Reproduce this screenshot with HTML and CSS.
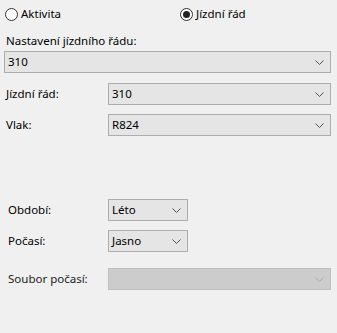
FILE: index.html
```html
<!DOCTYPE html>
<html lang="cs">
<head>
<meta charset="utf-8">
<link rel="stylesheet" href="styles.css">
</head>
<body>
<div class="panel">
  <div class="radios">
    <div class="radio r1"><span class="dot"></span><span>Aktivita</span></div>
    <div class="radio r2"><span class="dot on"></span><span>Jízdní řád</span></div>
  </div>
  <div class="caption">Nastavení jízdního řádu:</div>
  <div class="combo wide"><span class="val">310</span><svg class="chev" width="9" height="5" viewBox="0 0 9 5"><path d="M0.5 0.5 L4.5 4.5 L8.5 0.5" fill="none" stroke="#555" stroke-width="1"/></svg></div>

  <div class="row first">
    <div class="lbl">Jízdní řád:</div>
    <div class="combo fill"><span class="val">310</span><svg class="chev" width="9" height="5" viewBox="0 0 9 5"><path d="M0.5 0.5 L4.5 4.5 L8.5 0.5" fill="none" stroke="#555" stroke-width="1"/></svg></div>
  </div>
  <div class="row">
    <div class="lbl">Vlak:</div>
    <div class="combo fill"><span class="val">R824</span><svg class="chev" width="9" height="5" viewBox="0 0 9 5"><path d="M0.5 0.5 L4.5 4.5 L8.5 0.5" fill="none" stroke="#555" stroke-width="1"/></svg></div>
  </div>

  <div class="row season">
    <div class="lbl l2">Období:</div>
    <div class="combo small"><span class="val">Léto</span><svg class="chev" width="9" height="5" viewBox="0 0 9 5"><path d="M0.5 0.5 L4.5 4.5 L8.5 0.5" fill="none" stroke="#555" stroke-width="1"/></svg></div>
  </div>
  <div class="row">
    <div class="lbl l2">Počasí:</div>
    <div class="combo small"><span class="val">Jasno</span><svg class="chev" width="9" height="5" viewBox="0 0 9 5"><path d="M0.5 0.5 L4.5 4.5 L8.5 0.5" fill="none" stroke="#555" stroke-width="1"/></svg></div>
  </div>
  <div class="row file">
    <div class="lbl l2 dim">Soubor počasí:</div>
    <div class="combo fill disabled"><span class="val"></span><svg class="chev" width="9" height="5" viewBox="0 0 9 5"><path d="M0.5 0.5 L4.5 4.5 L8.5 0.5" fill="none" stroke="#aaa" stroke-width="1"/></svg></div>
  </div>
</div>
</body>
</html>
```
FILE: styles.css
```css
html, body {
  margin: 0;
  padding: 0;
  background: #f0f0f0;
}
body {
  width: 337px;
  height: 333px;
  overflow: hidden;
  font-family: "Noto Sans", "Open Sans", sans-serif;
  font-size: 11.5px;
  color: #000;
}
.panel {
  display: flex;
  flex-direction: column;
  padding: 6px 6px 0 4px;
}
.radios {
  display: flex;
  height: 16px;
  align-items: center;
}
.radio {
  display: flex;
  align-items: center;
  gap: 3px;
  line-height: 16px;
}
.r1 { margin-left: 1px; width: 175px; }
.dot {
  width: 11px;
  height: 11px;
  border: 1px solid #333;
  border-radius: 50%;
  background: #fff;
  display: flex;
  align-items: center;
  justify-content: center;
}
.dot.on::after {
  content: "";
  width: 7px;
  height: 7px;
  border-radius: 50%;
  background: #222;
}
.caption {
  margin-top: 11px;
  margin-left: 2px;
  line-height: 16px;
}
.combo {
  box-sizing: border-box;
  height: 22px;
  border: 1px solid #adadad;
  background: #e5e5e5;
  display: flex;
  align-items: center;
  justify-content: space-between;
  padding: 0 6px 0 3px;
}
.combo.wide {
  margin-top: 2px;
  width: 327px;
}
.combo.fill { flex: 1; }
.combo.small { width: 80px; }
.combo.disabled {
  background: #cccccc;
  border-color: #bfbfbf;
}
.val { line-height: 16px; }
.chev { display: block; }
.row {
  display: flex;
  align-items: center;
  margin-top: 9px;
}
.row.first { margin-top: 10px; }
.row.season { margin-top: 63px; }
.row.file { margin-top: 16px; }
.lbl {
  width: 102px;
  padding-left: 2px;
  line-height: 16px;
}
.l2 { padding-left: 4px; width: 100px; }
.dim { color: #222; }
```
